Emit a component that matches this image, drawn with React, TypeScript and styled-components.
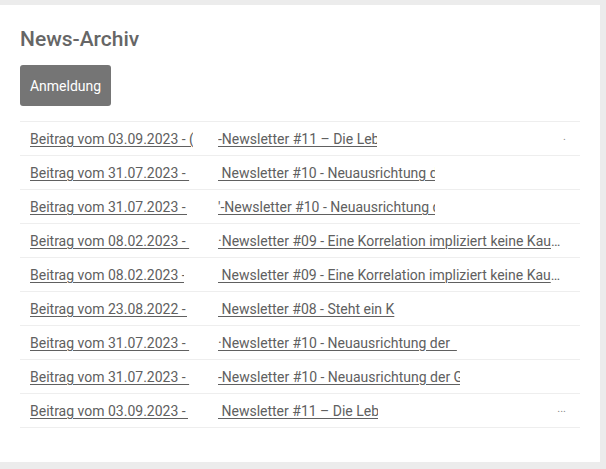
import React from "react";
import styled, { createGlobalStyle } from "styled-components";

const Global = createGlobalStyle`
  html, body { margin: 0; padding: 0; background: #ececec; }
  body { font-family: Roboto, "Liberation Sans", Arial, sans-serif; }
`;

const Page = styled.div`
  width: 606px;
  height: 469px;
  padding-top: 5px;
  box-sizing: border-box;
`;

const Card = styled.section`
  width: 600px;
  height: 457px;
  background: #fff;
  box-sizing: border-box;
  padding: 22px 20px 0 20px;
`;

const Title = styled.h2`
  margin: 0;
  font-family: Roboto, "Liberation Sans", sans-serif;
  font-weight: 500;
  font-size: 21px;
  line-height: 25px;
  color: #666;
`;

const Button = styled.button`
  margin-top: 13px;
  width: 91px;
  height: 41px;
  border: 0;
  border-radius: 3px;
  background: #757575;
  color: #fff;
  font-family: Roboto, "Liberation Sans", sans-serif;
  font-size: 14px;
  font-weight: 400;
  padding: 0;
`;

const List = styled.ul`
  list-style: none;
  margin: 15px 0 0 0;
  padding: 0;
  border-top: 1px solid #eee;
`;

const Row = styled.li`
  height: 33px;
  border-bottom: 1px solid #eee;
  display: flex;
  align-items: center;
  padding-left: 10px;
  position: relative;
`;

const Cell = styled.div<{ $w: number }>`
  width: ${(p) => p.$w}px;
  flex: none;
`;

const Piece = styled.a<{ $w: number; $ellipsis?: boolean }>`
  display: block;
  width: ${(p) => p.$w}px;
  overflow: hidden;
  white-space: pre;
  text-overflow: ${(p) => (p.$ellipsis ? "ellipsis" : "clip")};
  color: #606060;
  font-size: 14px;
  line-height: 18px;
  text-decoration: underline;
  text-decoration-thickness: 1px;
  text-underline-offset: 2px;
  cursor: pointer;
`;

const Tail = styled.span`
  position: absolute;
  right: 14px;
  top: 8px;
  color: #8a8a8a;
  font-size: 11px;
`;

type Item = {
  a: string;
  aw: number;
  b: string;
  bw: number;
  ell?: boolean;
  tail?: string;
};

const items: Item[] = [
  { a: "Beitrag vom 03.09.2023 - (", aw: 163, b: "-Newsletter #11 – Die Leb", bw: 159, tail: "." },
  { a: "Beitrag vom 31.07.2023 - ", aw: 160, b: " Newsletter #10 - Neuausrichtung der", bw: 217 },
  { a: "Beitrag vom 31.07.2023 - ", aw: 157, b: "'-Newsletter #10 - Neuausrichtung der", bw: 217 },
  { a: "Beitrag vom 08.02.2023 - ", aw: 160, b: "·Newsletter #09 - Eine Korrelation impliziert keine Kausalität", bw: 344, ell: true },
  { a: "Beitrag vom 08.02.2023 - ", aw: 154, b: " Newsletter #09 - Eine Korrelation impliziert keine Kausalität", bw: 344, ell: true },
  { a: "Beitrag vom 23.08.2022 - ", aw: 157, b: " Newsletter #08 - Steht ein K", bw: 177 },
  { a: "Beitrag vom 31.07.2023 - ", aw: 161, b: "·Newsletter #10 - Neuausrichtung der  ", bw: 240 },
  { a: "Beitrag vom 31.07.2023 - ", aw: 162, b: "-Newsletter #10 - Neuausrichtung der G", bw: 242 },
  { a: "Beitrag vom 03.09.2023 - ", aw: 158, b: " Newsletter #11 – Die Leb", bw: 160, tail: "..." },
];

export default function App() {
  return (
    <Page>
      <Global />
      <Card>
        <Title>News-Archiv</Title>
        <Button>Anmeldung</Button>
        <List>
          {items.map((it, i) => (
            <Row key={i}>
              <Cell $w={188}>
                <Piece $w={it.aw}>{it.a}</Piece>
              </Cell>
              <Cell $w={it.bw}>
                <Piece $w={it.bw} $ellipsis={it.ell}>{it.b}</Piece>
              </Cell>
              {it.tail && <Tail>{it.tail}</Tail>}
            </Row>
          ))}
        </List>
      </Card>
    </Page>
  );
}
